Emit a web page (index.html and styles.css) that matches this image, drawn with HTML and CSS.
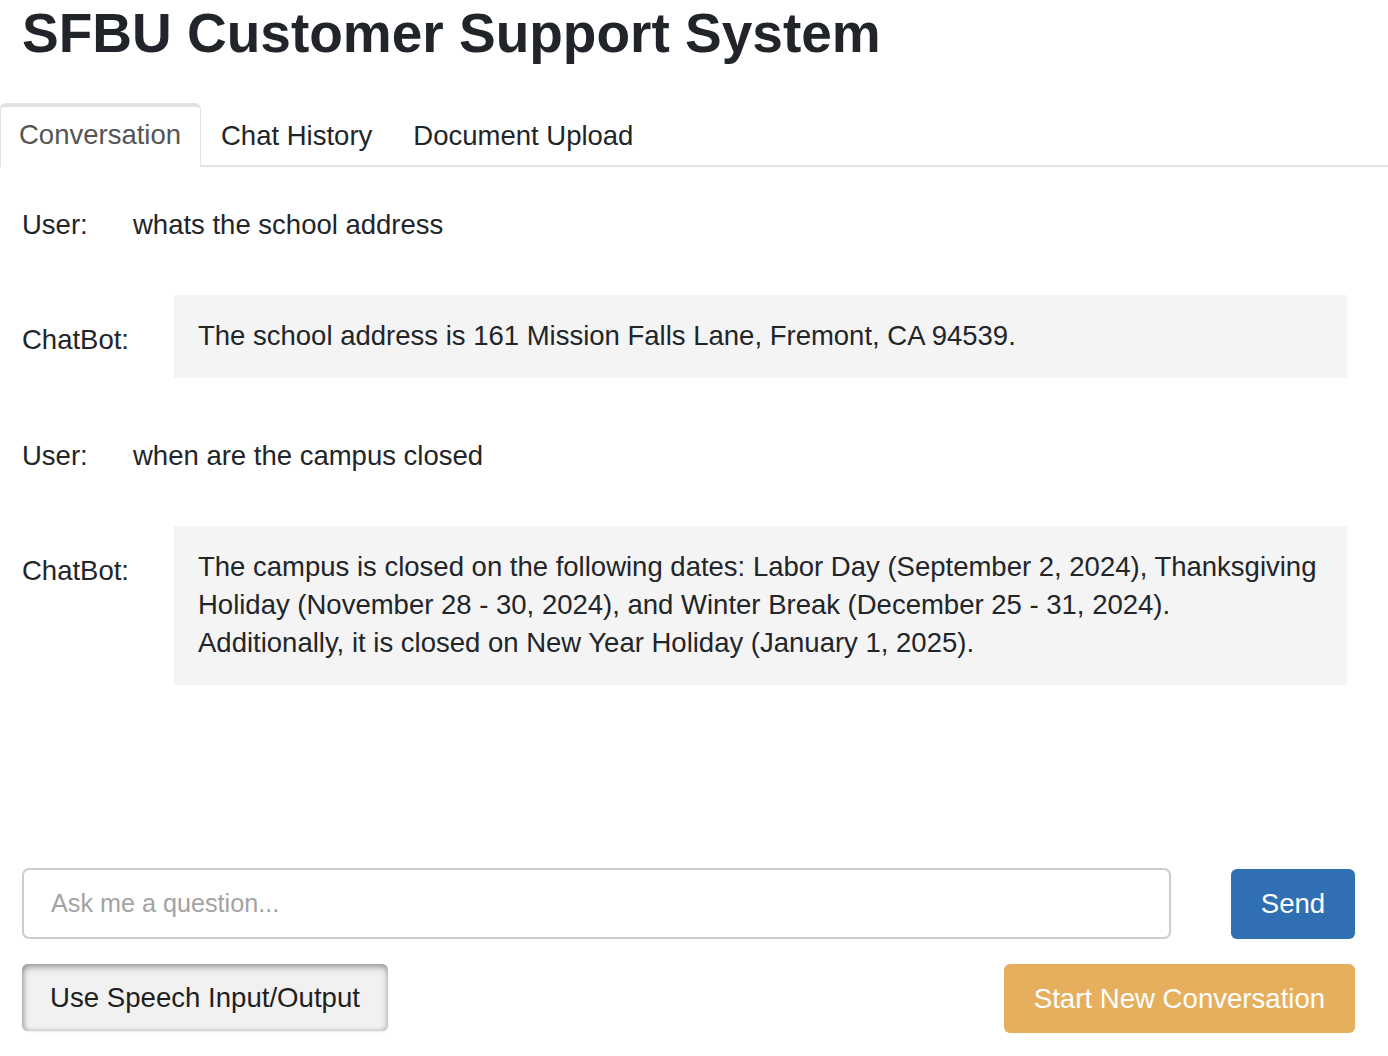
FILE: index.html
```html
<!DOCTYPE html>
<html lang="en">
<head>
<meta charset="utf-8">
<title>SFBU Customer Support System</title>
<link rel="stylesheet" href="styles.css">
</head>
<body>
<h1 class="title">SFBU Customer Support System</h1>
<nav class="tabs">
  <div class="tab active">Conversation</div>
  <div class="tab">Chat History</div>
  <div class="tab">Document Upload</div>
</nav>
<main class="chat">
  <div class="msg user-msg">
    <div class="label">User:</div>
    <div class="text">whats the school address</div>
  </div>
  <div class="msg bot-msg">
    <div class="label">ChatBot:</div>
    <div class="bubble">The school address is 161 Mission Falls Lane, Fremont, CA 94539.</div>
  </div>
  <div class="msg user-msg">
    <div class="label">User:</div>
    <div class="text">when are the campus closed</div>
  </div>
  <div class="msg bot-msg">
    <div class="label">ChatBot:</div>
    <div class="bubble">The campus is closed on the following dates: Labor Day (September 2, 2024), Thanksgiving Holiday (November 28 - 30, 2024), and Winter Break (December 25 - 31, 2024). Additionally, it is closed on New Year Holiday (January 1, 2025).</div>
  </div>
</main>
<div class="composer">
  <div class="input-row">
    <input class="question" type="text" placeholder="Ask me a question...">
    <button class="btn send">Send</button>
  </div>
  <div class="action-row">
    <button class="btn speech">Use Speech Input/Output</button>
    <button class="btn new-conv">Start New Conversation</button>
  </div>
</div>
</body>
</html>
```
FILE: styles.css
```css
html, body {
  margin: 0;
  padding: 0;
  background: #ffffff;
}
body {
  font-family: "Liberation Sans", Arial, Helvetica, sans-serif;
  color: #222529;
  width: 1388px;
}
.title {
  margin: 0;
  padding: 0 0 0 22px;
  font-size: 55px;
  font-weight: bold;
  line-height: 66px;
  color: #212529;
}
.tabs {
  display: flex;
  margin-top: 37px;
  border-bottom: 2px solid #e2e2e2;
  height: 62px;
}
.tab {
  font-size: 27.5px;
  line-height: 58px;
  padding: 4px 21px 0 20px;
  color: #212529;
  box-sizing: border-box;
}
.tab.active {
  width: 201px;
  color: #555555;
  border: 1px solid #e2e2e2;
  border-top: 4px solid #e2e2e2;
  border-bottom: none;
  border-radius: 6px 6px 0 0;
  background: #ffffff;
  height: 64px;
  line-height: 56px;
  padding: 0 0 0 18px;
}
.chat {
  padding: 22px 41px 0 22px;
  height: 701px;
  box-sizing: border-box;
}
.msg {
  display: flex;
  align-items: flex-start;
  font-size: 27.5px;
  line-height: 38px;
}
.label {
  flex: none;
}
.user-msg {
  margin-top: 17px;
  margin-bottom: 51px;
}
.user-msg .label {
  width: 111px;
}
.bot-msg {
  margin-bottom: 59px;
}
.bot-msg .label {
  width: 152px;
  padding-top: 26px;
}
.bubble {
  flex: 1;
  background: #f4f4f4;
  padding: 22px 27px 23px 24px;
}
.composer {
  padding: 0 33px 0 22px;
}
.input-row {
  display: flex;
  align-items: center;
  gap: 60px;
}
.question {
  flex: 1;
  height: 71px;
  box-sizing: border-box;
  border: 2px solid #cccccc;
  border-radius: 7px;
  padding: 0 27px;
  font-family: "Liberation Sans", Arial, Helvetica, sans-serif;
  font-size: 25.2px;
  color: #222;
  outline: none;
}
.question::placeholder {
  color: #a3a3a3;
}
.btn {
  font-family: "Liberation Sans", Arial, Helvetica, sans-serif;
  font-size: 27.6px;
  border: none;
  border-radius: 6px;
  cursor: pointer;
  padding: 0;
}
.send {
  width: 124px;
  height: 70px;
  background: #306fb1;
  color: #ffffff;
}
.action-row {
  display: flex;
  justify-content: space-between;
  margin-top: 25px;
}
.speech {
  width: 366px;
  height: 67px;
  background: #f1f1f1;
  color: #1f1f1f;
  box-shadow: inset 0 3px 7px rgba(0,0,0,0.35), inset 2px 0 5px rgba(0,0,0,0.15), 0 1px 2px rgba(0,0,0,0.08);
}
.new-conv {
  width: 351px;
  height: 69px;
  background: #e6af5e;
  color: #ffffff;
}
```
